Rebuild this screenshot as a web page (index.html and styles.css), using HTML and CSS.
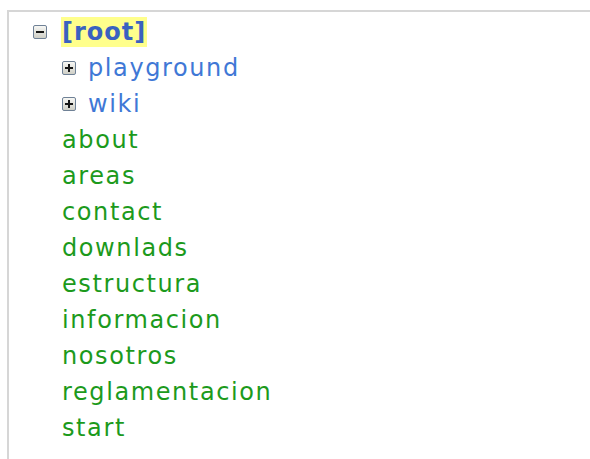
FILE: index.html
```html
<!DOCTYPE html>
<html>
<head>
<meta charset="utf-8">
<link rel="stylesheet" href="styles.css">
</head>
<body>
<div class="index">
  <ul class="tree">
    <li class="node open">
      <div class="row">
        <span class="toggle minus"></span>
        <a class="ns current" href="#">[root]</a>
      </div>
      <ul class="tree sub">
        <li class="node">
          <div class="row"><span class="toggle plus"></span><a class="ns" href="#">playground</a></div>
        </li>
        <li class="node">
          <div class="row"><span class="toggle plus"></span><a class="ns" href="#">wiki</a></div>
        </li>
        <li class="leaf"><a class="page" href="#">about</a></li>
        <li class="leaf"><a class="page" href="#">areas</a></li>
        <li class="leaf"><a class="page" href="#">contact</a></li>
        <li class="leaf"><a class="page" href="#">downlads</a></li>
        <li class="leaf"><a class="page" href="#">estructura</a></li>
        <li class="leaf"><a class="page" href="#">informacion</a></li>
        <li class="leaf"><a class="page" href="#">nosotros</a></li>
        <li class="leaf"><a class="page" href="#">reglamentacion</a></li>
        <li class="leaf"><a class="page" href="#">start</a></li>
      </ul>
    </li>
  </ul>
</div>
</body>
</html>
```
FILE: styles.css
```css
html, body {
  margin: 0;
  padding: 0;
  background: #ffffff;
}

body {
  padding: 10px 0 0 7px;
  font-family: "DejaVu Sans", Verdana, sans-serif;
  font-size: 24px;
  letter-spacing: 1.6px;
}

.index {
  border-top: 2px solid #d6d6d6;
  border-left: 2px solid #d6d6d6;
  height: 460px;
  padding: 2px 0 0 24px;
}

.tree {
  list-style: none;
  margin: 0;
  padding: 0;
}

.tree.sub {
  padding-left: 29px;
}

.row {
  display: flex;
  align-items: center;
  gap: 15px;
  height: 36px;
}

.sub .row {
  gap: 12px;
}

.leaf {
  height: 36px;
  line-height: 36px;
}

a {
  text-decoration: none;
}

.ns {
  color: #3f78d6;
}

.ns.current {
  color: #3a62c0;
  font-weight: bold;
  letter-spacing: 1px;
  background: #ffff8c;
  padding: 1px 1px;
  margin-left: -1px;
}

.page {
  color: #1c9a1c;
}

/* expand / collapse box */
.toggle {
  position: relative;
  width: 12px;
  height: 12px;
  flex: none;
  border: 1px solid #6f8196;
  border-radius: 2px;
  background: linear-gradient(#f7f7f4, #cfcfc6);
}

.toggle::before,
.toggle.plus::after {
  content: "";
  position: absolute;
  background: #151515;
}

.toggle::before {
  left: 2px;
  top: 5px;
  width: 8px;
  height: 2px;
}

.toggle.plus::after {
  left: 5px;
  top: 2px;
  width: 2px;
  height: 8px;
}
```
